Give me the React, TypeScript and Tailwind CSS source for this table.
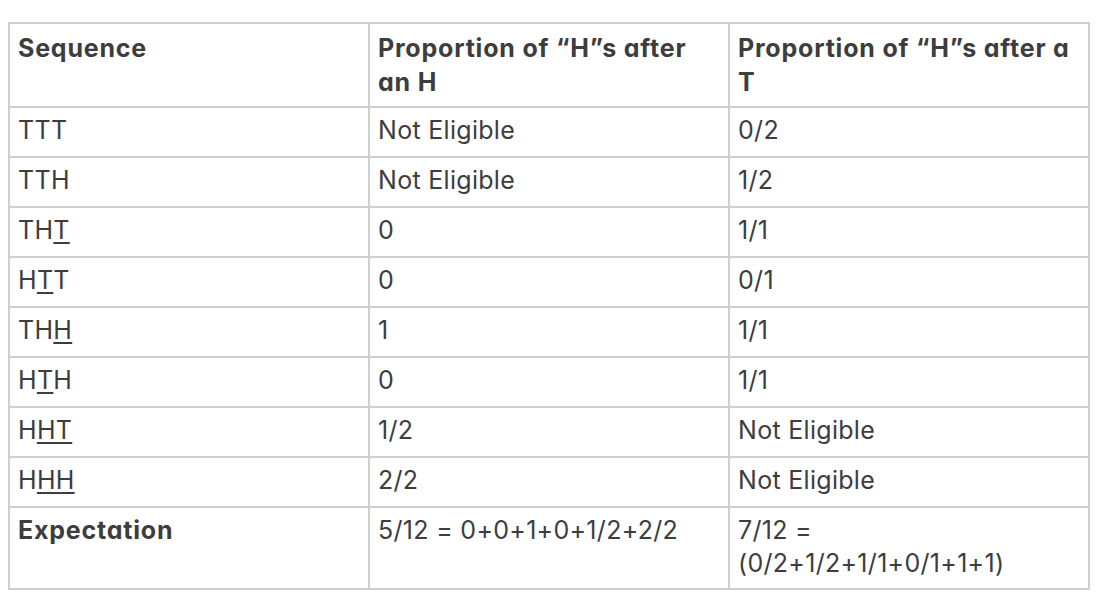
import React from "react";

type Cell = React.ReactNode;

const U = ({ children }: { children: React.ReactNode }) => (
  <span className="underline decoration-[1.5px] underline-offset-[3px]">{children}</span>
);

const rows: Cell[][] = [
  ["TTT", "Not Eligible", "0/2"],
  ["TTH", "Not Eligible", "1/2"],
  [<>TH<U>T</U></>, "0", "1/1"],
  [<>H<U>T</U>T</>, "0", "0/1"],
  [<>TH<U>H</U></>, "1", "1/1"],
  [<>H<U>T</U>H</>, "0", "1/1"],
  [<>H<U>HT</U></>, "1/2", "Not Eligible"],
  [<>H<U>HH</U></>, "2/2", "Not Eligible"],
];

const cell = "border-2 border-[#cfcfcf] px-[8px] pt-[6px] align-top";

export default function App() {
  return (
    <div className="min-h-screen bg-white pt-[22px] pl-[8px] font-['Inter','Liberation_Sans',sans-serif] text-[#3d3d3d]">
      <table className="w-[1080px] table-fixed border-collapse text-[25px] leading-[33px] tracking-[0.3px]">
        <colgroup>
          <col className="w-[360px]" />
          <col className="w-[360px]" />
          <col className="w-[360px]" />
        </colgroup>
        <thead>
          <tr className="h-[84px]">
            {["Sequence", "Proportion of \u201cH\u201ds after an H", "Proportion of \u201cH\u201ds after a T"].map((h) => (
              <th
                key={h}
                className="border-2 border-[#cfcfcf] px-[8px] pt-[7px] align-top text-left font-bold leading-[34px] tracking-[0.8px] [font-feature-settings:'cv11']"
              >
                {h}
              </th>
            ))}
          </tr>
        </thead>
        <tbody>
          {rows.map((r, i) => (
            <tr key={i} className="h-[50px]">
              {r.map((c, j) => (
                <td key={j} className={cell}>
                  {c}
                </td>
              ))}
            </tr>
          ))}
          <tr className="h-[82px]">
            <td className={`${cell} font-bold tracking-[0.8px] [font-feature-settings:'cv11']`}>Expectation</td>
            <td className={cell}>5/12 = 0+0+1+0+1/2+2/2</td>
            <td className={cell}>
              7/12 =<br />(0/2+1/2+1/1+0/1+1+1)
            </td>
          </tr>
        </tbody>
      </table>
    </div>
  );
}
